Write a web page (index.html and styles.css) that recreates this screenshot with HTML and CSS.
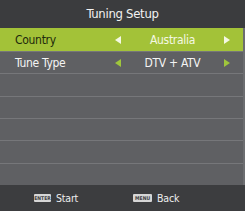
FILE: index.html
```html
<!DOCTYPE html>
<html lang="en">
<head>
  <meta charset="UTF-8">
  <title>Tuning Setup</title>
  <link rel="stylesheet" href="styles.css">
</head>
<body>
  <div class="menu">
    <div class="title">Tuning Setup</div>

    <!-- settings rows -->
    <div class="rows">
      <div class="row active">
        <span class="label">Country</span>
        <span class="arrow left"></span>
        <span class="value">Australia</span>
        <span class="arrow right"></span>
      </div>
      <div class="row">
        <span class="label">Tune Type</span>
        <span class="arrow left"></span>
        <span class="value">DTV + ATV</span>
        <span class="arrow right"></span>
      </div>
      <div class="row"></div>
      <div class="row"></div>
      <div class="row"></div>
      <div class="row"></div>
      <div class="row"></div>
    </div>

    <div class="footer">
      <div class="hint"><span class="key">ENTER</span>Start</div>
      <div class="hint"><span class="key">MENU</span>Back</div>
    </div>
  </div>
</body>
</html>
```

FILE: styles.css
```css
body {
  margin: 0;
  background: #fff;
  font-family: "DejaVu Sans Condensed", "DejaVu Sans", sans-serif;
}

.menu {
  width: 245px;
  height: 211px;
  display: flex;
  flex-direction: column;
  background: #5e5f62;
}

.title {
  height: 28px;
  line-height: 28px;
  text-align: center;
  background: #3b3c3e;
  color: #f2f2f2;
  font-size: 13px;
  letter-spacing: -0.3px;
}

.rows {
  height: 157px;
  display: flex;
  flex-direction: column;
  border-right: 2px solid #6c6d70;
}

.row {
  flex: 1;
  display: flex;
  align-items: center;
  border-top: 1px solid #76777a;
  color: #f4f4f4;
  font-size: 12px;
  letter-spacing: -0.3px;
  background: #5f6063;
}

.row.active {
  flex: none;
  height: 23px;
  border-top: none;
  background: #a3c238;
  color: #1e2a0c;
}

.label {
  width: 100px;
  padding-left: 15px;
}

.value {
  width: 103px;
  text-align: center;
}

.row.active .value {
  color: #f4f8e4;
}

.arrow {
  width: 0;
  height: 0;
  border-top: 4px solid transparent;
  border-bottom: 4px solid transparent;
}

.arrow.left {
  border-right: 6px solid #9fc63c;
}

.arrow.right {
  border-left: 6px solid #9fc63c;
}

.row.active .arrow.left {
  border-right-color: #f4f8e4;
}

.row.active .arrow.right {
  border-left-color: #f4f8e4;
}

.footer {
  flex: 1;
  display: flex;
  align-items: center;
  padding-left: 34px;
  gap: 55px;
  background: #3c3d3f;
  color: #eeeeee;
  font-size: 10.5px;
  letter-spacing: -0.2px;
}

.hint {
  display: flex;
  align-items: center;
  gap: 5px;
}

.key {
  width: 17px;
  height: 8px;
  text-align: center;
  background: #d6d6d6;
  color: #3c3d3f;
  font-size: 5px;
  font-weight: bold;
  line-height: 8px;
  letter-spacing: 0;
  border-radius: 1px;
  overflow: hidden;
}

.hint + .hint .key {
  width: 19px;
}
```
